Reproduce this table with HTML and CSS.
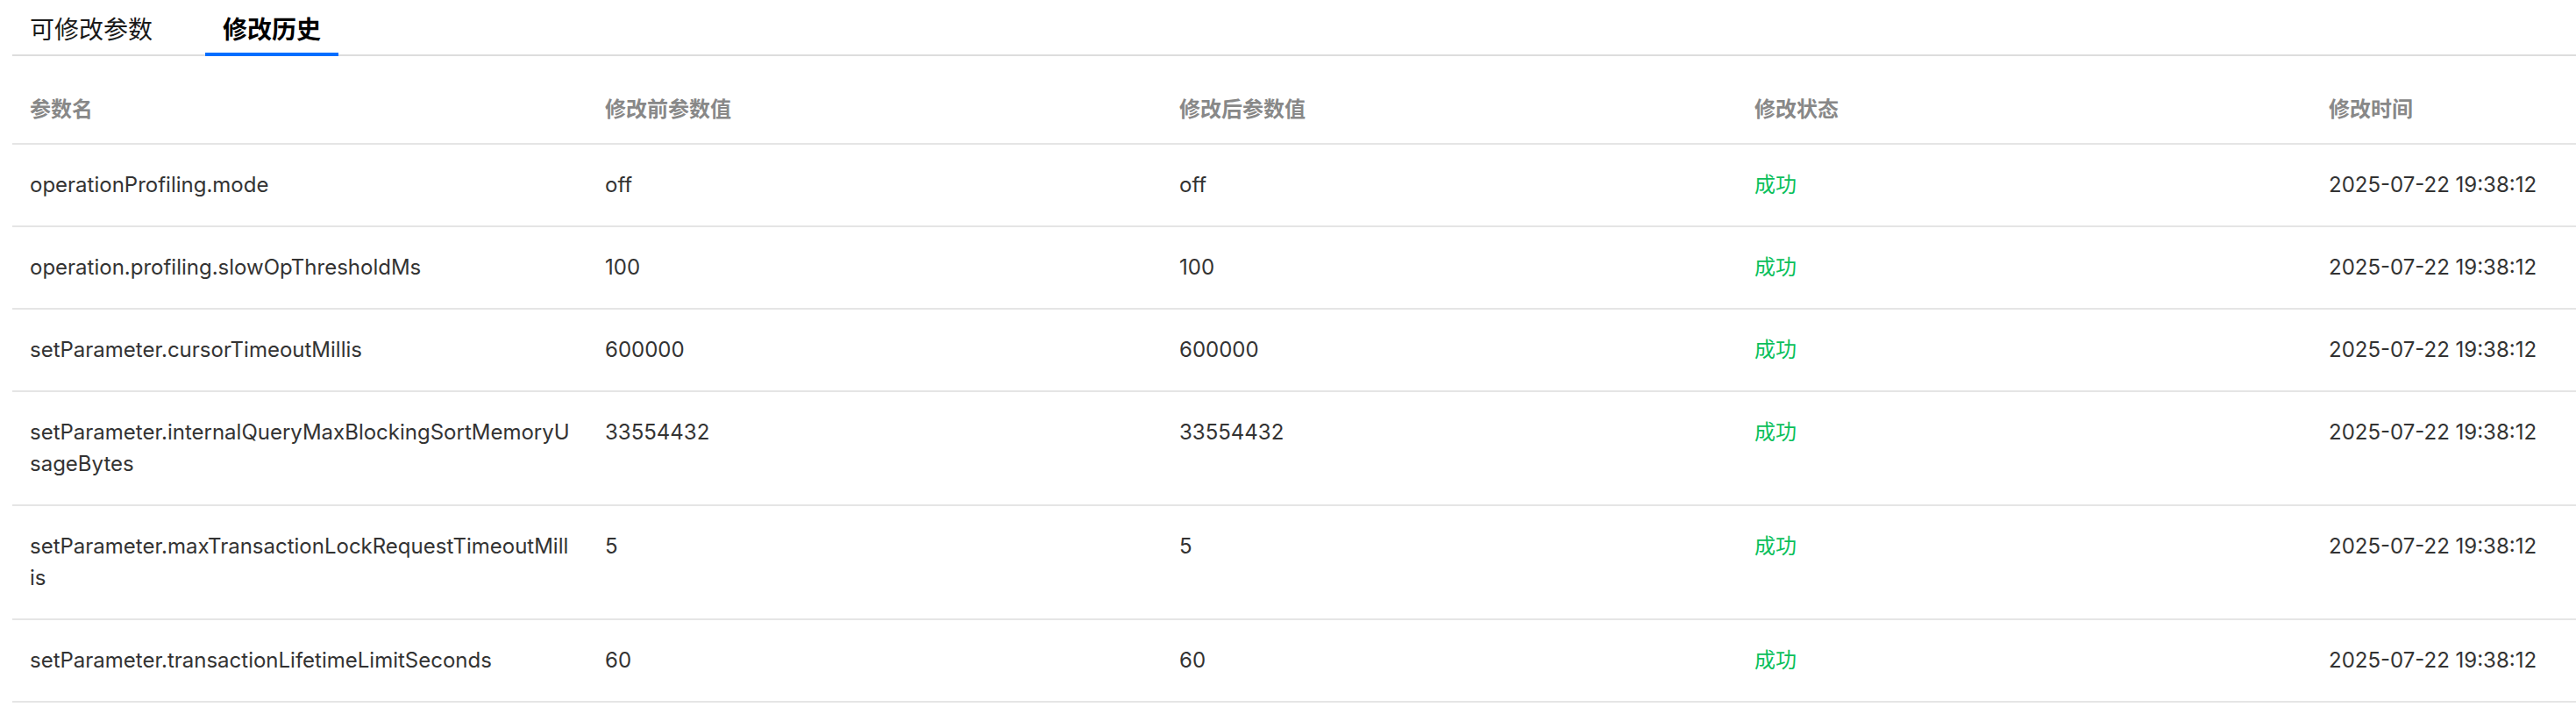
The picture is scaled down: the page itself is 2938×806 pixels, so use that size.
FILE: index.html
```html
<!DOCTYPE html>
<html lang="zh-CN">
<head>
<meta charset="utf-8">
<title>修改历史</title>
<link rel="stylesheet" href="styles.css">
</head>
<body>
<div class="page">
  <div class="tabs">
    <div class="tab">可修改参数</div>
    <div class="tab tab-active">修改历史</div>
  </div>
  <table class="history">
    <colgroup>
      <col class="c1"><col class="c2"><col class="c3"><col class="c4"><col class="c5">
    </colgroup>
    <thead>
      <tr>
        <th>参数名</th>
        <th>修改前参数值</th>
        <th>修改后参数值</th>
        <th>修改状态</th>
        <th>修改时间</th>
      </tr>
    </thead>
    <tbody>
      <tr>
        <td class="name">operationProfiling.mode</td>
        <td>off</td>
        <td>off</td>
        <td class="ok">成功</td>
        <td>2025-07-22 19:38:12</td>
      </tr>
      <tr>
        <td class="name">operation.profiling.slowOpThresholdMs</td>
        <td>100</td>
        <td>100</td>
        <td class="ok">成功</td>
        <td>2025-07-22 19:38:12</td>
      </tr>
      <tr>
        <td class="name">setParameter.cursorTimeoutMillis</td>
        <td>600000</td>
        <td>600000</td>
        <td class="ok">成功</td>
        <td>2025-07-22 19:38:12</td>
      </tr>
      <tr>
        <td class="name">setParameter.internalQueryMaxBlockingSortMemoryUsageBytes</td>
        <td>33554432</td>
        <td>33554432</td>
        <td class="ok">成功</td>
        <td>2025-07-22 19:38:12</td>
      </tr>
      <tr>
        <td class="name">setParameter.maxTransactionLockRequestTimeoutMillis</td>
        <td>5</td>
        <td>5</td>
        <td class="ok">成功</td>
        <td>2025-07-22 19:38:12</td>
      </tr>
      <tr>
        <td class="name">setParameter.transactionLifetimeLimitSeconds</td>
        <td>60</td>
        <td>60</td>
        <td class="ok">成功</td>
        <td>2025-07-22 19:38:12</td>
      </tr>
    </tbody>
  </table>
</div>
</body>
</html>
```
FILE: styles.css
```css
* { box-sizing: border-box; }
html, body {
  margin: 0;
  padding: 0;
  background: #ffffff;
}
body {
  font-family: Inter, "Noto Sans CJK SC", "Noto Sans", sans-serif;
  color: #333333;
  overflow: hidden;
}
.page {
  padding-left: 14px;
}
.tabs {
  display: flex;
  gap: 40px;
  border-bottom: 2px solid #dddddd;
}
.tab {
  position: relative;
  padding: 14px 20px 8px;
  font-size: 28px;
  line-height: 40px;
  color: #1a1a1a;
}
.tab-active {
  color: #000000;
  font-weight: 600;
}
.tab-active::after {
  content: "";
  position: absolute;
  left: 0;
  right: 0;
  bottom: -2px;
  height: 4px;
  background: #006eff;
}
.history {
  margin-top: 23px;
  width: 2924px;
  table-layout: fixed;
  border-collapse: collapse;
  font-size: 24px;
  line-height: 36px;
}
.c1 { width: 656px; }
.c2 { width: 655px; }
.c3 { width: 656px; }
.c4 { width: 655px; }
.c5 { width: auto; }
.history th {
  text-align: left;
  font-weight: 600;
  color: #888888;
  padding: 20px 20px;
  border-bottom: 2px solid #e5e5e5;
}
.history td {
  vertical-align: top;
  padding: 28px 20px;
  border-bottom: 2px solid #e5e5e5;
  color: #333333;
}
.history td.name {
  word-break: break-all;
}
.history td.ok {
  color: #0abf5b;
}
```
